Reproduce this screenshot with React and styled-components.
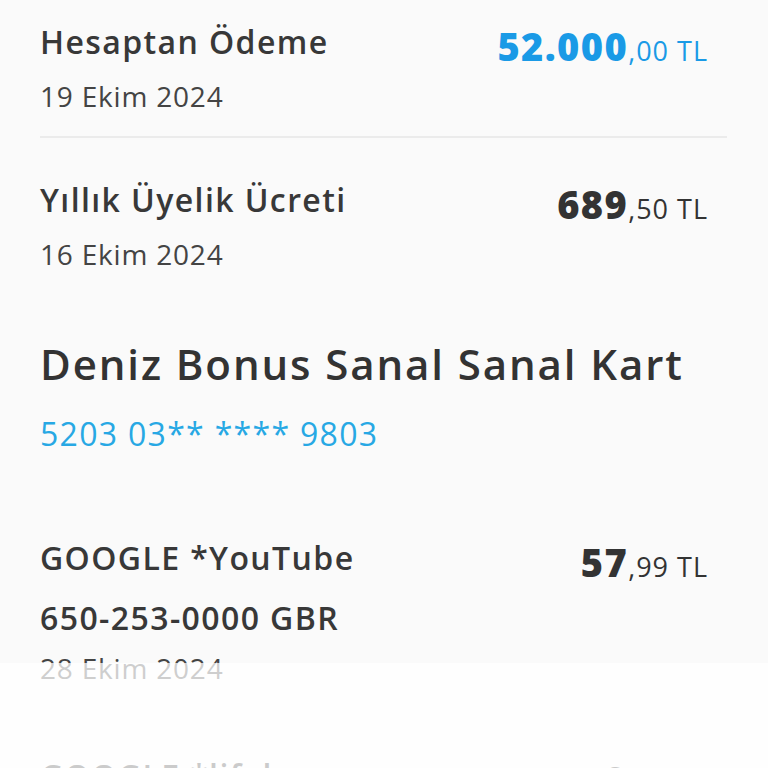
import React from "react";
import styled, { createGlobalStyle } from "styled-components";

const GlobalStyle = createGlobalStyle`
  html, body {
    margin: 0;
    padding: 0;
    background: #fafafa;
  }
  body {
    font-family: "Open Sans", "Noto Sans", sans-serif;
    color: #3a3a3a;
    overflow: hidden;
  }
`;

const transactions1 = [
  { title: "Hesaptan Ödeme", date: "19 Ekim 2024", main: "52.000", cents: "00", accent: true, divider: true },
  { title: "Yıllık Üyelik Ücreti", date: "16 Ekim 2024", main: "689", cents: "50" },
];

const transactions2 = [
  { title: "GOOGLE *YouTube\n650-253-0000 GBR", date: "28 Ekim 2024", main: "57", cents: "99" },
  { title: "GOOGLE *lifeh", date: "", main: "9", cents: "99" },
];

function Amount({ main, cents, accent }) {
  return (
    <Price $accent={accent}>
      <Whole>{main}</Whole>
      <Fraction>,{cents} TL</Fraction>
    </Price>
  );
}

function Transaction({ item, gap }) {
  return (
    <Item $divider={item.divider} $gap={gap}>
      <TopRow>
        <Title>{item.title}</Title>
        <Amount main={item.main} cents={item.cents} accent={item.accent} />
      </TopRow>
      {item.date && <DateText>{item.date}</DateText>}
    </Item>
  );
}

function App() {
  return (
    <>
      <GlobalStyle />
      <Page>
        <List>
          {transactions1.map((t, i) => (
            <Transaction key={i} item={t} gap={24} />
          ))}
        </List>
        <CardHeader>
          <CardName>Deniz Bonus Sanal Sanal Kart</CardName>
          <CardNumber>5203 03** **** 9803</CardNumber>
        </CardHeader>
        <List>
          {transactions2.map((t, i) => (
            <Transaction key={i} item={t} gap={64} />
          ))}
        </List>
      </Page>
      <Fade />
    </>
  );
}

const Page = styled.div`
  padding: 18px 41px 0 40px;
`;

const List = styled.div`
  display: flex;
  flex-direction: column;
`;

const Item = styled.div`
  padding: 4px 0 ${(p) => (p.$divider ? "20px" : `${p.$gap}px`)};
  margin-bottom: ${(p) => (p.$divider ? "38px" : "0")};
  border-bottom: ${(p) => (p.$divider ? "2px solid #ebebeb" : "none")};
`;

const TopRow = styled.div`
  display: flex;
  justify-content: space-between;
  align-items: flex-start;
`;

const Title = styled.div`
  font-size: 32px;
  font-weight: 600;
  line-height: 60px;
  letter-spacing: 1.4px;
  white-space: pre-line;
  color: #383838;
  margin-top: -10px;
`;

const Price = styled.div`
  display: flex;
  align-items: baseline;
  padding-right: 19px;
  color: ${(p) => (p.$accent ? "#1a9ae6" : "#333")};
  margin-top: -6px;
`;

const Whole = styled.span`
  font-size: 38px;
  font-weight: 800;
  line-height: 60px;
  letter-spacing: 1.4px;
`;

const Fraction = styled.span`
  font-size: 27px;
  font-weight: 400;
  letter-spacing: 1px;
`;

const DateText = styled.div`
  font-size: 28px;
  font-weight: 400;
  line-height: 40px;
  letter-spacing: 0.8px;
  color: #444;
`;

const CardHeader = styled.div`
  padding: 38px 0 72px;
`;

const CardName = styled.div`
  font-size: 42px;
  font-weight: 600;
  line-height: 56px;
  letter-spacing: 1.9px;
  color: #333;
`;

const CardNumber = styled.div`
  font-size: 32px;
  font-weight: 400;
  line-height: 56px;
  margin-top: 14px;
  letter-spacing: 1.3px;
  color: #27a8e4;
`;

const Fade = styled.div`
  position: fixed;
  left: 0;
  right: 0;
  top: 663px;
  bottom: 0;
  background: rgba(255, 255, 255, 0.74);
`;

export default App;
